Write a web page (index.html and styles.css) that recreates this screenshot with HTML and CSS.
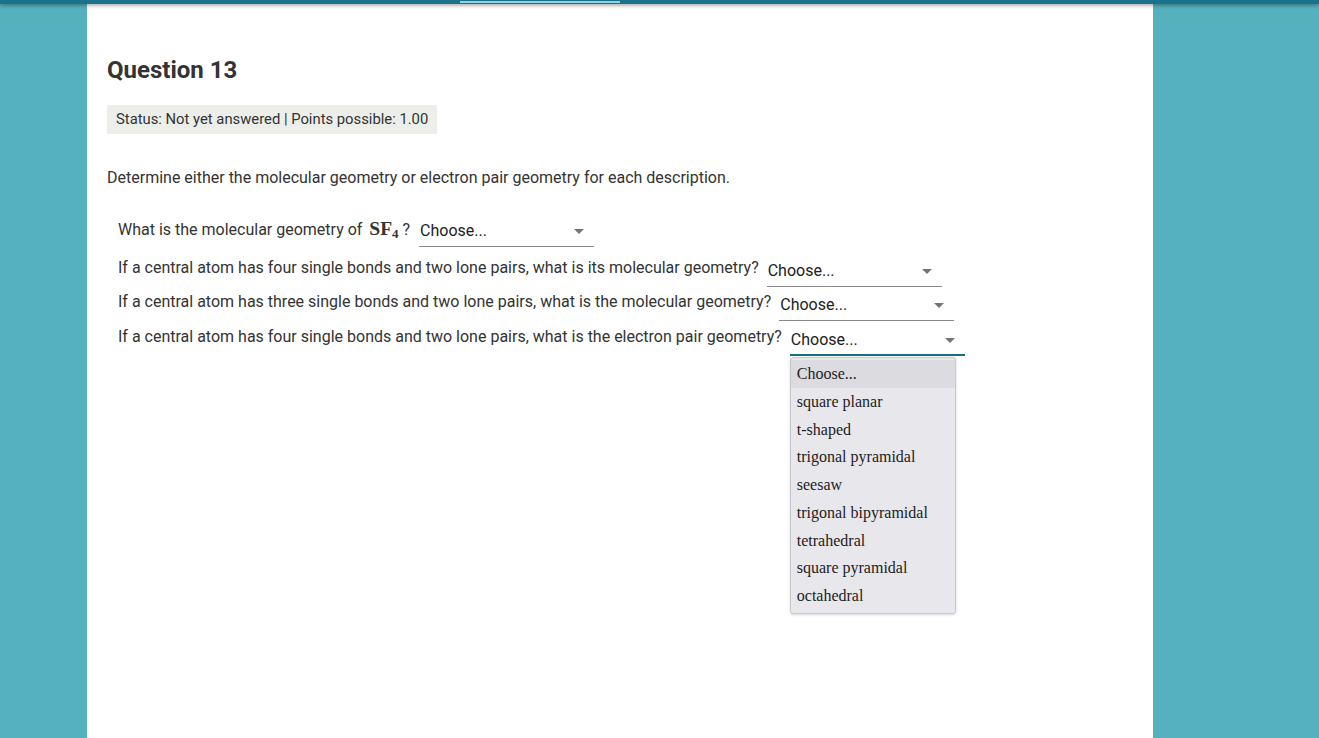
FILE: index.html
```html
<!DOCTYPE html>
<html lang="en">
<head>
    <meta charset="UTF-8">
    <title>Question 13</title>
    <link rel="stylesheet" href="styles.css">
</head>
<body>
    <div class="topbar">
        <div class="topbar-active"></div>
    </div>
    <div class="page">
        <div class="card">
            <h2 class="q-title">Question 13</h2>
            <div class="q-status">Status: Not yet answered | Points possible: 1.00</div>
            <p class="q-text">Determine either the molecular geometry or electron pair geometry for each description.</p>

            <div class="q-list">
                <div class="q-row">
                    What is the molecular geometry of <span class="math">SF<sub>4</sub></span> ?
                    <span class="select w1">Choose...<span class="caret"></span></span>
                </div>
                <div class="q-row">
                    If a central atom has four single bonds and two lone pairs, what is its molecular geometry?
                    <span class="select">Choose...<span class="caret"></span></span>
                </div>
                <div class="q-row">
                    If a central atom has three single bonds and two lone pairs, what is the molecular geometry?
                    <span class="select">Choose...<span class="caret"></span></span>
                </div>
                <div class="q-row">
                    If a central atom has four single bonds and two lone pairs, what is the electron pair geometry?
                    <span class="select open">Choose...<span class="caret"></span>
                        <ul class="menu">
                            <li class="active">Choose...</li>
                            <li>square planar</li>
                            <li>t-shaped</li>
                            <li>trigonal pyramidal</li>
                            <li>seesaw</li>
                            <li>trigonal bipyramidal</li>
                            <li>tetrahedral</li>
                            <li>square pyramidal</li>
                            <li>octahedral</li>
                        </ul>
                    </span>
                </div>
            </div>
        </div>
    </div>
</body>
</html>
```

FILE: styles.css
```css
* {
    margin: 0;
    padding: 0;
    box-sizing: border-box;
}

html, body {
    height: 100%;
}

body {
    font-family: Roboto, 'Liberation Sans', sans-serif;
    background-color: #56b1bf;
    color: #333;
    overflow: hidden;
}

.topbar {
    position: relative;
    z-index: 2;
    height: 4px;
    background-color: #17728a;
    box-shadow: 0 1px 4px rgba(0, 0, 0, 0.45);
}

.topbar-active {
    margin-left: 460px;
    width: 160px;
    height: 3px;
    border-top: 1px solid #17728a;
    background-color: #8ed2e3;
}

.page {
    height: calc(100% - 4px);
    padding: 0 166px 0 87px;
}

.card {
    height: 100%;
    background-color: #fff;
    padding: 52px 20px 0 20px;
}

.q-title {
    font-size: 24px;
    font-weight: 700;
    color: #333;
    line-height: 28px;
}

.q-status {
    display: inline-block;
    margin-top: 21px;
    padding: 0 9px;
    height: 29px;
    line-height: 29px;
    font-size: 14.8px;
    color: #333;
    background-color: #eceee9;
}

.q-text {
    margin-top: 34px;
    font-size: 16px;
    line-height: 20px;
    color: #333;
}

.q-list {
    margin-top: 31px;
    padding-left: 11px;
}

.q-row {
    font-size: 16px;
    line-height: 20px;
    color: #333;
    height: 35px;
}

.q-row:first-child {
    height: 39px;
}

.q-row:nth-child(2) {
    height: 34px;
}

.math {
    font-family: 'Liberation Serif', 'DejaVu Serif', serif;
    font-size: 19.5px;
    font-weight: 700;
    color: #333;
    margin: 0 0 0 3px;
}

.math sub {
    font-size: 13px;
    vertical-align: -3px;
}

.select {
    position: relative;
    display: inline-block;
    vertical-align: -3px;
    width: 175px;
    margin-left: 4px;
    padding: 0 2px 5px 1px;
    color: #212121;
    border-bottom: 1px solid #8a8a8a;
}

.select.w1 {
    vertical-align: -1px;
    margin-left: 5px;
}

.select.open {
    border-bottom: 2px solid #137087;
    padding-bottom: 4px;
}

.caret {
    position: absolute;
    right: 10px;
    top: 8px;
    border-left: 5px solid transparent;
    border-right: 5px solid transparent;
    border-top: 5px solid #757575;
}

.menu {
    position: absolute;
    top: 27px;
    left: 0;
    width: 166px;
    padding: 2px 0 3px;
    list-style: none;
    background-color: #e8e7ec;
    border: 1px solid #c8c8cc;
    border-radius: 3px;
    box-shadow: 0 1px 3px rgba(0, 0, 0, 0.15);
    font-family: 'Liberation Serif', 'Times New Roman', serif;
    font-size: 16px;
    color: #222;
    z-index: 3;
}

.menu li {
    height: 27.75px;
    line-height: 28px;
    padding-left: 6px;
}

.menu li.active {
    background-color: #dcdbe0;
}
```
